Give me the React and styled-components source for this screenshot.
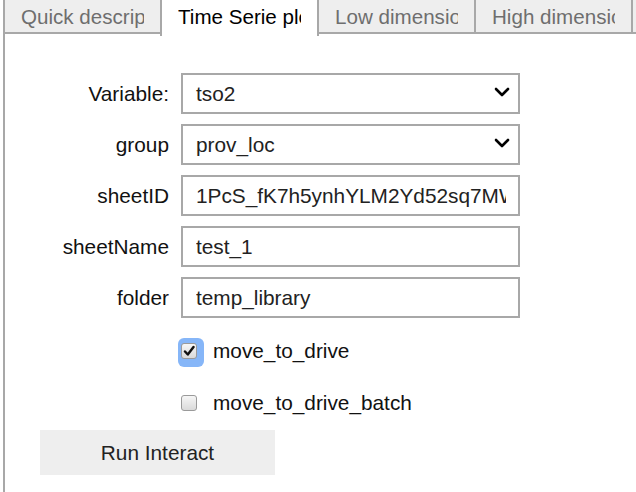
import styled, { createGlobalStyle } from 'styled-components';

const GlobalStyle = createGlobalStyle`
    body {
        margin: 0;
        background: #fff;
        overflow: hidden;
        font-family: "Liberation Sans", Arial, sans-serif;
    }
`

const tabs = ['Quick description', 'Time Serie plot', 'Low dimensional', 'High dimensional', 'Other'];

const ChevronDown = () => (
    <svg width="16" height="10" viewBox="0 0 16 10">
        <path d="M2 2 L8 8 L14 2" fill="none" stroke="#000" strokeWidth="2.6" strokeLinecap="round" strokeLinejoin="round" />
    </svg>
);

const CheckMark = () => (
    <svg width="12" height="12" viewBox="0 0 12 12">
        <path d="M2 6.5 L4.8 9.5 L10.5 2" fill="none" stroke="#111" strokeWidth="2.4" strokeLinecap="round" strokeLinejoin="round" />
    </svg>
);

export default function App() {
    return (
        <Page>
            <GlobalStyle />
            <TabBar>
                {tabs.map((t, i) => (
                    <Tab key={t} $active={i === 1}>
                        <TabLabel>{t}</TabLabel>
                    </Tab>
                ))}
            </TabBar>
            <Panel>
                <Form>
                    <Row>
                        <Label>Variable:</Label>
                        <SelectBox>
                            <span>tso2</span>
                            <ChevronDown />
                        </SelectBox>
                    </Row>
                    <Row>
                        <Label>group</Label>
                        <SelectBox>
                            <span>prov_loc</span>
                            <ChevronDown />
                        </SelectBox>
                    </Row>
                    <Row>
                        <Label>sheetID</Label>
                        <TextInput readOnly value="1PcS_fK7h5ynhYLM2Yd52sq7MWxyz" />
                    </Row>
                    <Row>
                        <Label>sheetName</Label>
                        <TextInput readOnly value="test_1" />
                    </Row>
                    <Row>
                        <Label>folder</Label>
                        <TextInput readOnly value="temp_library" />
                    </Row>
                    <CheckRow $first>
                        <FocusRing>
                            <CheckBox><CheckMark /></CheckBox>
                        </FocusRing>
                        <CheckText>move_to_drive</CheckText>
                    </CheckRow>
                    <CheckRow>
                        <CheckBox />
                        <CheckText>move_to_drive_batch</CheckText>
                    </CheckRow>
                    <RunButton>Run Interact</RunButton>
                </Form>
            </Panel>
        </Page>
    );
}

const Page = styled.div`
    padding-left: 3px;
    width: 800px;
`

const TabBar = styled.div`
    display: flex;
    align-items: flex-start;
    height: 34px;
`

const Tab = styled.div`
    position: relative;
    z-index: ${p => (p.$active ? 1 : 0)};
    box-sizing: border-box;
    flex: none;
    width: 159px;
    height: ${p => (p.$active ? '36px' : '34px')};
    margin-left: -2px;
    padding: 0 16px;
    border: 2px solid #a8a8a8;
    border-top: none;
    border-bottom: ${p => (p.$active ? 'none' : '2px solid #a8a8a8')};
    background: ${p => (p.$active ? '#fff' : '#eeeeee')};
    color: ${p => (p.$active ? '#000' : '#6e6e6e')};
    font-size: 20.6px;
    line-height: 34px;

    &:first-child {
        margin-left: 0;
    }
`

const TabLabel = styled.span`
    display: block;
    overflow: hidden;
    white-space: nowrap;
`

const Panel = styled.div`
    box-sizing: border-box;
    min-height: 520px;
    margin-top: -2px;
    border: 2px solid #a8a8a8;
    border-right: none;
    padding: 39px 0 0 0;
`

const Form = styled.div`
    display: flex;
    flex-direction: column;
    gap: 10px;
`

const Row = styled.div`
    display: flex;
    align-items: center;
    height: 41px;
`

const Label = styled.div`
    width: 164px;
    margin-right: 12px;
    text-align: right;
    font-size: 20.8px;
    color: #111;
`

const SelectBox = styled.div`
    box-sizing: border-box;
    display: flex;
    align-items: center;
    justify-content: space-between;
    width: 339px;
    height: 41px;
    border: 2px solid #a8a8a8;
    padding: 0 8px 3px 13px;
    font-size: 20.8px;
    color: #222;

    span {
        padding-top: 3px;
    }
`

const TextInput = styled.input`
    box-sizing: border-box;
    width: 339px;
    height: 41px;
    border: 2px solid #a8a8a8;
    border-radius: 0;
    padding: 0 12px 0 13px;
    font-family: "Liberation Sans", Arial, sans-serif;
    font-size: 20.8px;
    color: #222;
    outline: none;
    background: #fff;
`

const CheckRow = styled.div`
    display: flex;
    align-items: center;
    gap: 16px;
    height: 42px;
    margin-top: ${p => (p.$first ? '2px' : '0')};
    padding-left: 176px;
`

const FocusRing = styled.span`
    display: flex;
    padding: 5px 7px 8px 3px;
    margin: -5px -7px -8px -3px;
    border-radius: 6px;
    background: #86b6f8;
`

const CheckBox = styled.span`
    box-sizing: border-box;
    display: flex;
    align-items: center;
    justify-content: center;
    width: 16px;
    height: 16px;
    border: 1px solid #9a9a9a;
    border-radius: 3px;
    background: linear-gradient(#f6f6f6, #dadada);
`

const CheckText = styled.span`
    font-size: 20.8px;
    color: #111;
`

const RunButton = styled.button`
    align-self: flex-start;
    width: 235px;
    height: 45px;
    margin: -4px 0 0 35px;
    border: none;
    background: #eeeeee;
    font-family: "Liberation Sans", Arial, sans-serif;
    font-size: 20.8px;
    color: #222;
`
